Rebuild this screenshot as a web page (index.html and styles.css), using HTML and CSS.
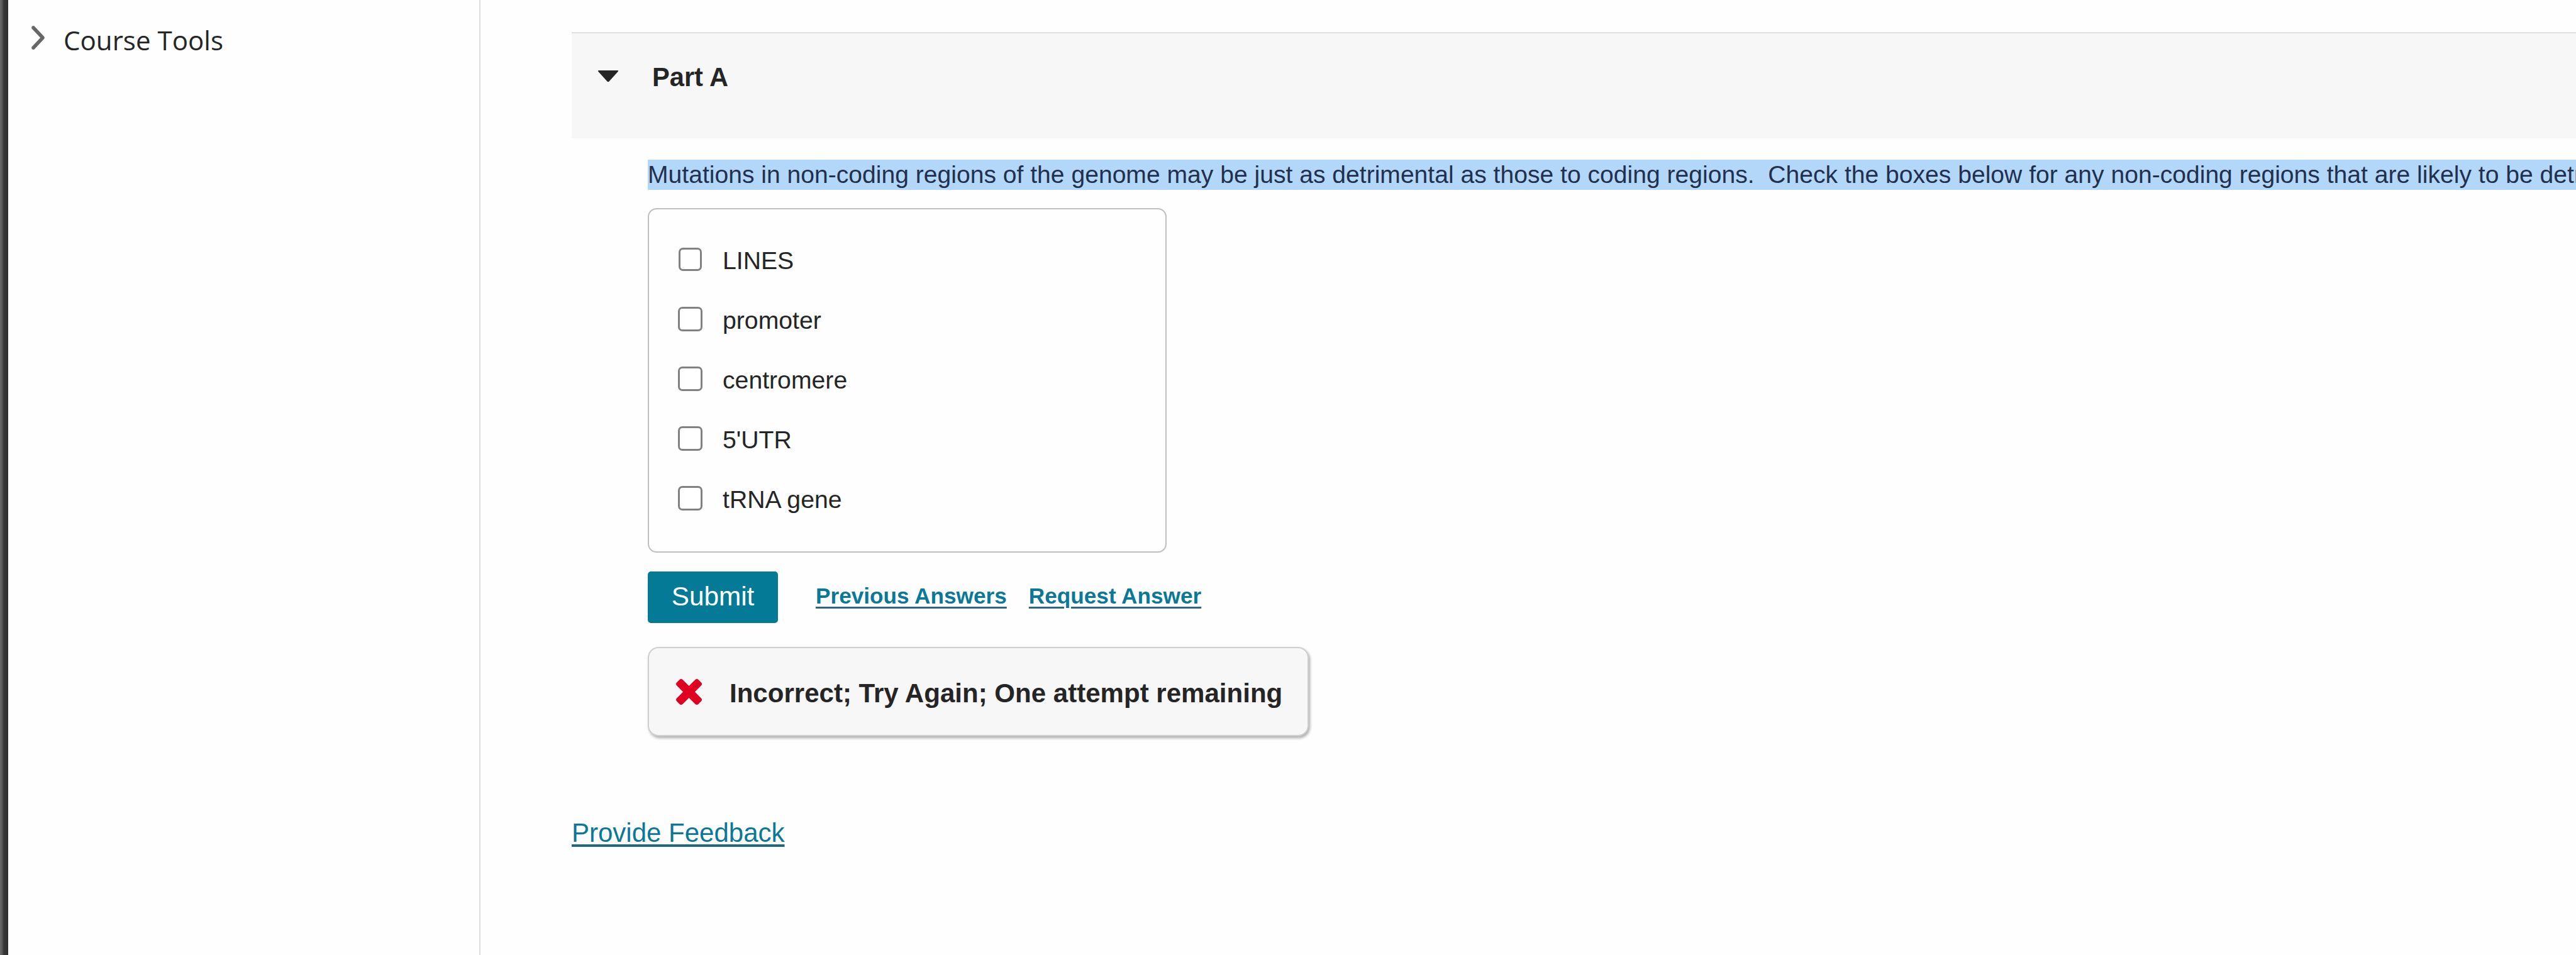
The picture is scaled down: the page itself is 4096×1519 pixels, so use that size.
FILE: index.html
```html
<!DOCTYPE html>
<html lang="en">
<head>
<meta charset="utf-8">
<title>Part A</title>
<link rel="stylesheet" href="styles.css">
</head>
<body>
<div class="page">
  <div class="window-edge"></div>
  <nav class="sidebar">
    <a class="nav-item">
      <svg class="chevron" viewBox="0 0 22 38" fill="none"><path d="M3 3 L18 19 L3 35"/></svg>
      <span>Course Tools</span>
    </a>
  </nav>
  <main class="main">
    <header class="part-header">
      <svg class="caret" viewBox="0 0 34 20"><path d="M2 1 H32 Q34 1 32.5 3 L18.5 18.5 Q17 20 15.500 18.500 L1.500 3 Q0 1 2 1Z"/></svg>
      <h2 class="part-title">Part A</h2>
    </header>
    <section class="part-body">
      <p class="question">Mutations in non-coding regions of the genome may be just as detrimental as those to coding regions.&nbsp; Check the boxes below for any non-coding regions that are likely to be detr</p>
      <form class="options">
        <label class="option"><input class="check check-first" type="checkbox"><span class="label">LINES</span></label>
        <label class="option"><input class="check" type="checkbox"><span class="label">promoter</span></label>
        <label class="option"><input class="check" type="checkbox"><span class="label">centromere</span></label>
        <label class="option"><input class="check" type="checkbox"><span class="label">5'UTR</span></label>
        <label class="option"><input class="check" type="checkbox"><span class="label">tRNA gene</span></label>
      </form>
      <div class="actions">
        <button class="submit" type="button">Submit</button>
        <a class="action-link">Previous Answers</a>
        <a class="action-link">Request Answer</a>
      </div>
      <div class="result">
        <svg class="cross" viewBox="110 -18 1188 1188"><path d="M1298 214q0 -40 -28 -68l-136 -136q-28 -28 -68 -28t-68 28l-294 294l-294 -294q-28 -28 -68 -28t-68 28l-136 136q-28 28 -28 68t28 68l294 294l-294 294q-28 28 -28 68t28 68l136 136q28 28 68 28t68 -28l294 -294l294 294q28 28 68 28t68 -28l136 -136q28 -28 28 -68t-28 -68l-294 -294l294 -294q28 -28 28 -68z"/></svg>
        <span class="result-text">Incorrect; Try Again; One attempt remaining</span>
      </div>
    </section>
    <a class="feedback-link">Provide Feedback</a>
  </main>
</div>
</body>
</html>
```

FILE: styles.css
```css
* {
  box-sizing: border-box;
}

body {
  margin: 0;
  background: #fefefe;
  color: #252525;
  font-family: "Liberation Sans", Arial, sans-serif;
}

.page {
  display: flex;
  height: 1519px;
  overflow: hidden;
}

.window-edge {
  flex: none;
  width: 13px;
  background: linear-gradient(to right, #6a6a6a 0, #5c5c5c 3px, #383838 6px, #303030 13px);
}

.sidebar {
  flex: none;
  width: 751px;
  padding: 32px 0 0 37px;
  border-right: 2px solid #dedede;
}

.nav-item {
  display: flex;
  align-items: center;
  gap: 29px;
  height: 64px;
  font-family: "Open Sans", "Noto Sans", sans-serif;
  font-size: 42.1px;
  line-height: 64px;
}

.chevron {
  width: 22px;
  height: 38px;
  margin-top: -8px;
  stroke: #666;
  stroke-width: 5.5;
  stroke-linecap: round;
  stroke-linejoin: round;
}

.main {
  flex: 1;
  min-width: 0;
  padding: 51px 0 0 145px;
}

.part-header {
  display: flex;
  align-items: flex-start;
  gap: 53px;
  height: 169px;
  padding: 50px 0 0 41px;
  border-top: 2px solid #e0e0e0;
  background: #f7f7f7;
}

.caret {
  width: 34px;
  height: 20px;
  margin-top: 8px;
  fill: #252525;
}

.part-title {
  margin: 0;
  font-size: 41.6px;
  font-weight: bold;
  line-height: 40px;
}

.part-body {
  padding: 34px 0 0 121px;
}

.question {
  margin: 0;
  height: 48px;
  overflow: hidden;
  background: #b3d7f9;
  color: #22304f;
  font-size: 39.08px;
  line-height: 47px;
  white-space: nowrap;
}

.options {
  width: 825px;
  height: 548px;
  margin-top: 29px;
  padding: 32px 0 0 46px;
  border: 2px solid #bfbfbf;
  border-radius: 14px;
}

.option {
  display: flex;
  align-items: center;
  gap: 32px;
  height: 95px;
  font-size: 39.2px;
  line-height: 46px;
}

.label {
  padding-top: 5px;
}

.check {
  appearance: none;
  flex: none;
  width: 39px;
  height: 39px;
  margin: 0;
  border: 3px solid #818181;
  border-radius: 7px;
  background: #fff;
}

.check-first {
  width: 37px;
  height: 37px;
  margin: 0 1px;
}

.actions {
  display: flex;
  align-items: center;
  height: 82px;
  margin-top: 30px;
}

.submit {
  width: 207px;
  height: 82px;
  margin-right: 60px;
  padding: 0 0 3px;
  border: 0;
  border-radius: 5px;
  background: #047a96;
  color: #fff;
  font-family: inherit;
  font-size: 42.3px;
}

.action-link {
  margin: -5px 35px 0 0;
  color: #0b7897;
  font-size: 35.2px;
  font-weight: bold;
  line-height: 42px;
  text-decoration: underline;
  text-decoration-color: #2d6586;
  text-decoration-thickness: 3px;
  text-underline-offset: 5px;
}

.result {
  display: flex;
  align-items: center;
  gap: 44px;
  width: 1051px;
  height: 142px;
  margin-top: 38px;
  padding-left: 43px;
  border: 2px solid #cfcfcf;
  border-radius: 17px;
  background: #f7f7f7;
  box-shadow: 2px 3px 4px rgba(0, 0, 0, 0.32);
}

.cross {
  flex: none;
  width: 41px;
  height: 41px;
  fill: #e0001f;
}

.result-text {
  padding-top: 5px;
  font-size: 42.05px;
  font-weight: bold;
  line-height: 48px;
  white-space: nowrap;
}

.feedback-link {
  display: inline-block;
  margin-top: 130px;
  color: #0b7897;
  font-size: 42px;
  line-height: 48px;
  text-decoration: underline;
  text-decoration-color: #1d6782;
  text-decoration-thickness: 4px;
  text-underline-offset: 4px;
}
```
